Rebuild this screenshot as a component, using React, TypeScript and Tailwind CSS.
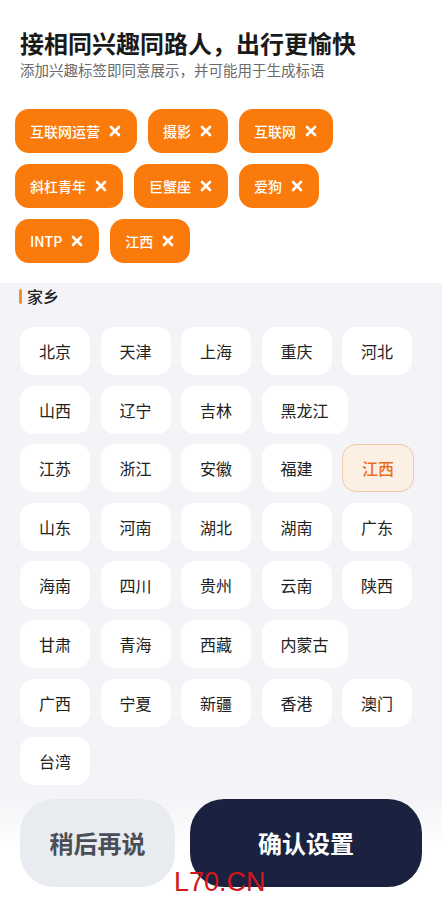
import React from 'react'

const selectedTags = ['互联网运营', '摄影', '互联网', '斜杠青年', '巨蟹座', '爱狗', 'INTP', '江西']

const provinceRows = [
  ['北京', '天津', '上海', '重庆', '河北'],
  ['山西', '辽宁', '吉林', '黑龙江'],
  ['江苏', '浙江', '安徽', '福建', '江西'],
  ['山东', '河南', '湖北', '湖南', '广东'],
  ['海南', '四川', '贵州', '云南', '陕西'],
  ['甘肃', '青海', '西藏', '内蒙古'],
  ['广西', '宁夏', '新疆', '香港', '澳门'],
  ['台湾'],
]

function CloseIcon() {
  return (
    <svg className="w-3 h-3 shrink-0" viewBox="0 0 12 12" fill="none" aria-hidden="true">
      <path d="M2 2L10 10M10 2L2 10" stroke="white" strokeWidth="2.6" strokeLinecap="round" />
    </svg>
  )
}

export default function App() {
  const current = '江西'

  return (
    <div
      className="relative min-h-screen w-full bg-[#f4f4f8]"
      style={{ fontFamily: '"Noto Sans CJK SC", "Noto Sans", sans-serif' }}
    >
      <section className="bg-white px-[20px] pt-[28px] pb-[20px]">
        <h1 className="text-[24px] leading-[30px] font-bold text-[#1a1a1a]">接相同兴趣同路人，出行更愉快</h1>
        <p className="mt-[2px] text-[14.5px] leading-[20px] text-[#6b6b6b]">添加兴趣标签即同意展示，并可能用于生成标语</p>

        <div className="-ml-[5px] mt-[29px] flex w-[320px] flex-wrap gap-[11px]">
          {selectedTags.map((tag) => (
            <button
              key={tag}
              className="flex h-[44px] items-center gap-[9px] rounded-[14px] bg-[#fa7b0c] pl-[15px] pr-[16px] text-[14px] font-medium text-white"
            >
              <span>{tag}</span>
              <CloseIcon />
            </button>
          ))}
        </div>
      </section>

      <section className="px-[20px] pt-[3px]">
        <div className="flex items-center gap-[5px]">
          <span className="h-[15px] w-[3px] -ml-[1px] rounded-full bg-[#f0902c]" />
          <h2 className="text-[16px] leading-[20px] font-medium text-[#222]">家乡</h2>
        </div>

        <div className="mt-[21px] flex flex-col gap-[10.6px]">
          {provinceRows.map((row, i) => (
            <div key={i} className="flex gap-[10.5px]">
              {row.map((p) => (
                <button
                  key={p}
                  className={
                    p === current
                      ? 'flex h-[48px] min-w-[70px] items-center justify-center rounded-[14px] border border-[#efc9a2] bg-[#fcefe3] px-[19px] text-[16px] font-medium text-[#e96f1c]'
                      : 'flex h-[48px] min-w-[70px] items-center justify-center rounded-[14px] bg-white px-[19px] text-[16px] text-[#222]'
                  }
                >
                  {p}
                </button>
              ))}
            </div>
          ))}
        </div>
      </section>

      <div className="mt-[14px] flex gap-[15px] bg-gradient-to-b from-[#f4f4f8] to-white to-[45%] px-[20px] pb-[16px]">
        <button className="h-[88px] w-[155px] rounded-[34px] bg-[#e8ebef] text-[24px] font-bold text-[#4a4f57]">稍后再说</button>
        <button className="h-[88px] flex-1 rounded-[34px] bg-[#1a2240] text-[24px] font-bold text-white">确认设置</button>
      </div>

      <span
        className="absolute left-[174px] top-[869px] text-[27px] leading-none text-[#d4161b]"
        style={{ fontFamily: '"Liberation Sans", Arial, sans-serif' }}
      >
        L70.CN
      </span>
    </div>
  )
}
